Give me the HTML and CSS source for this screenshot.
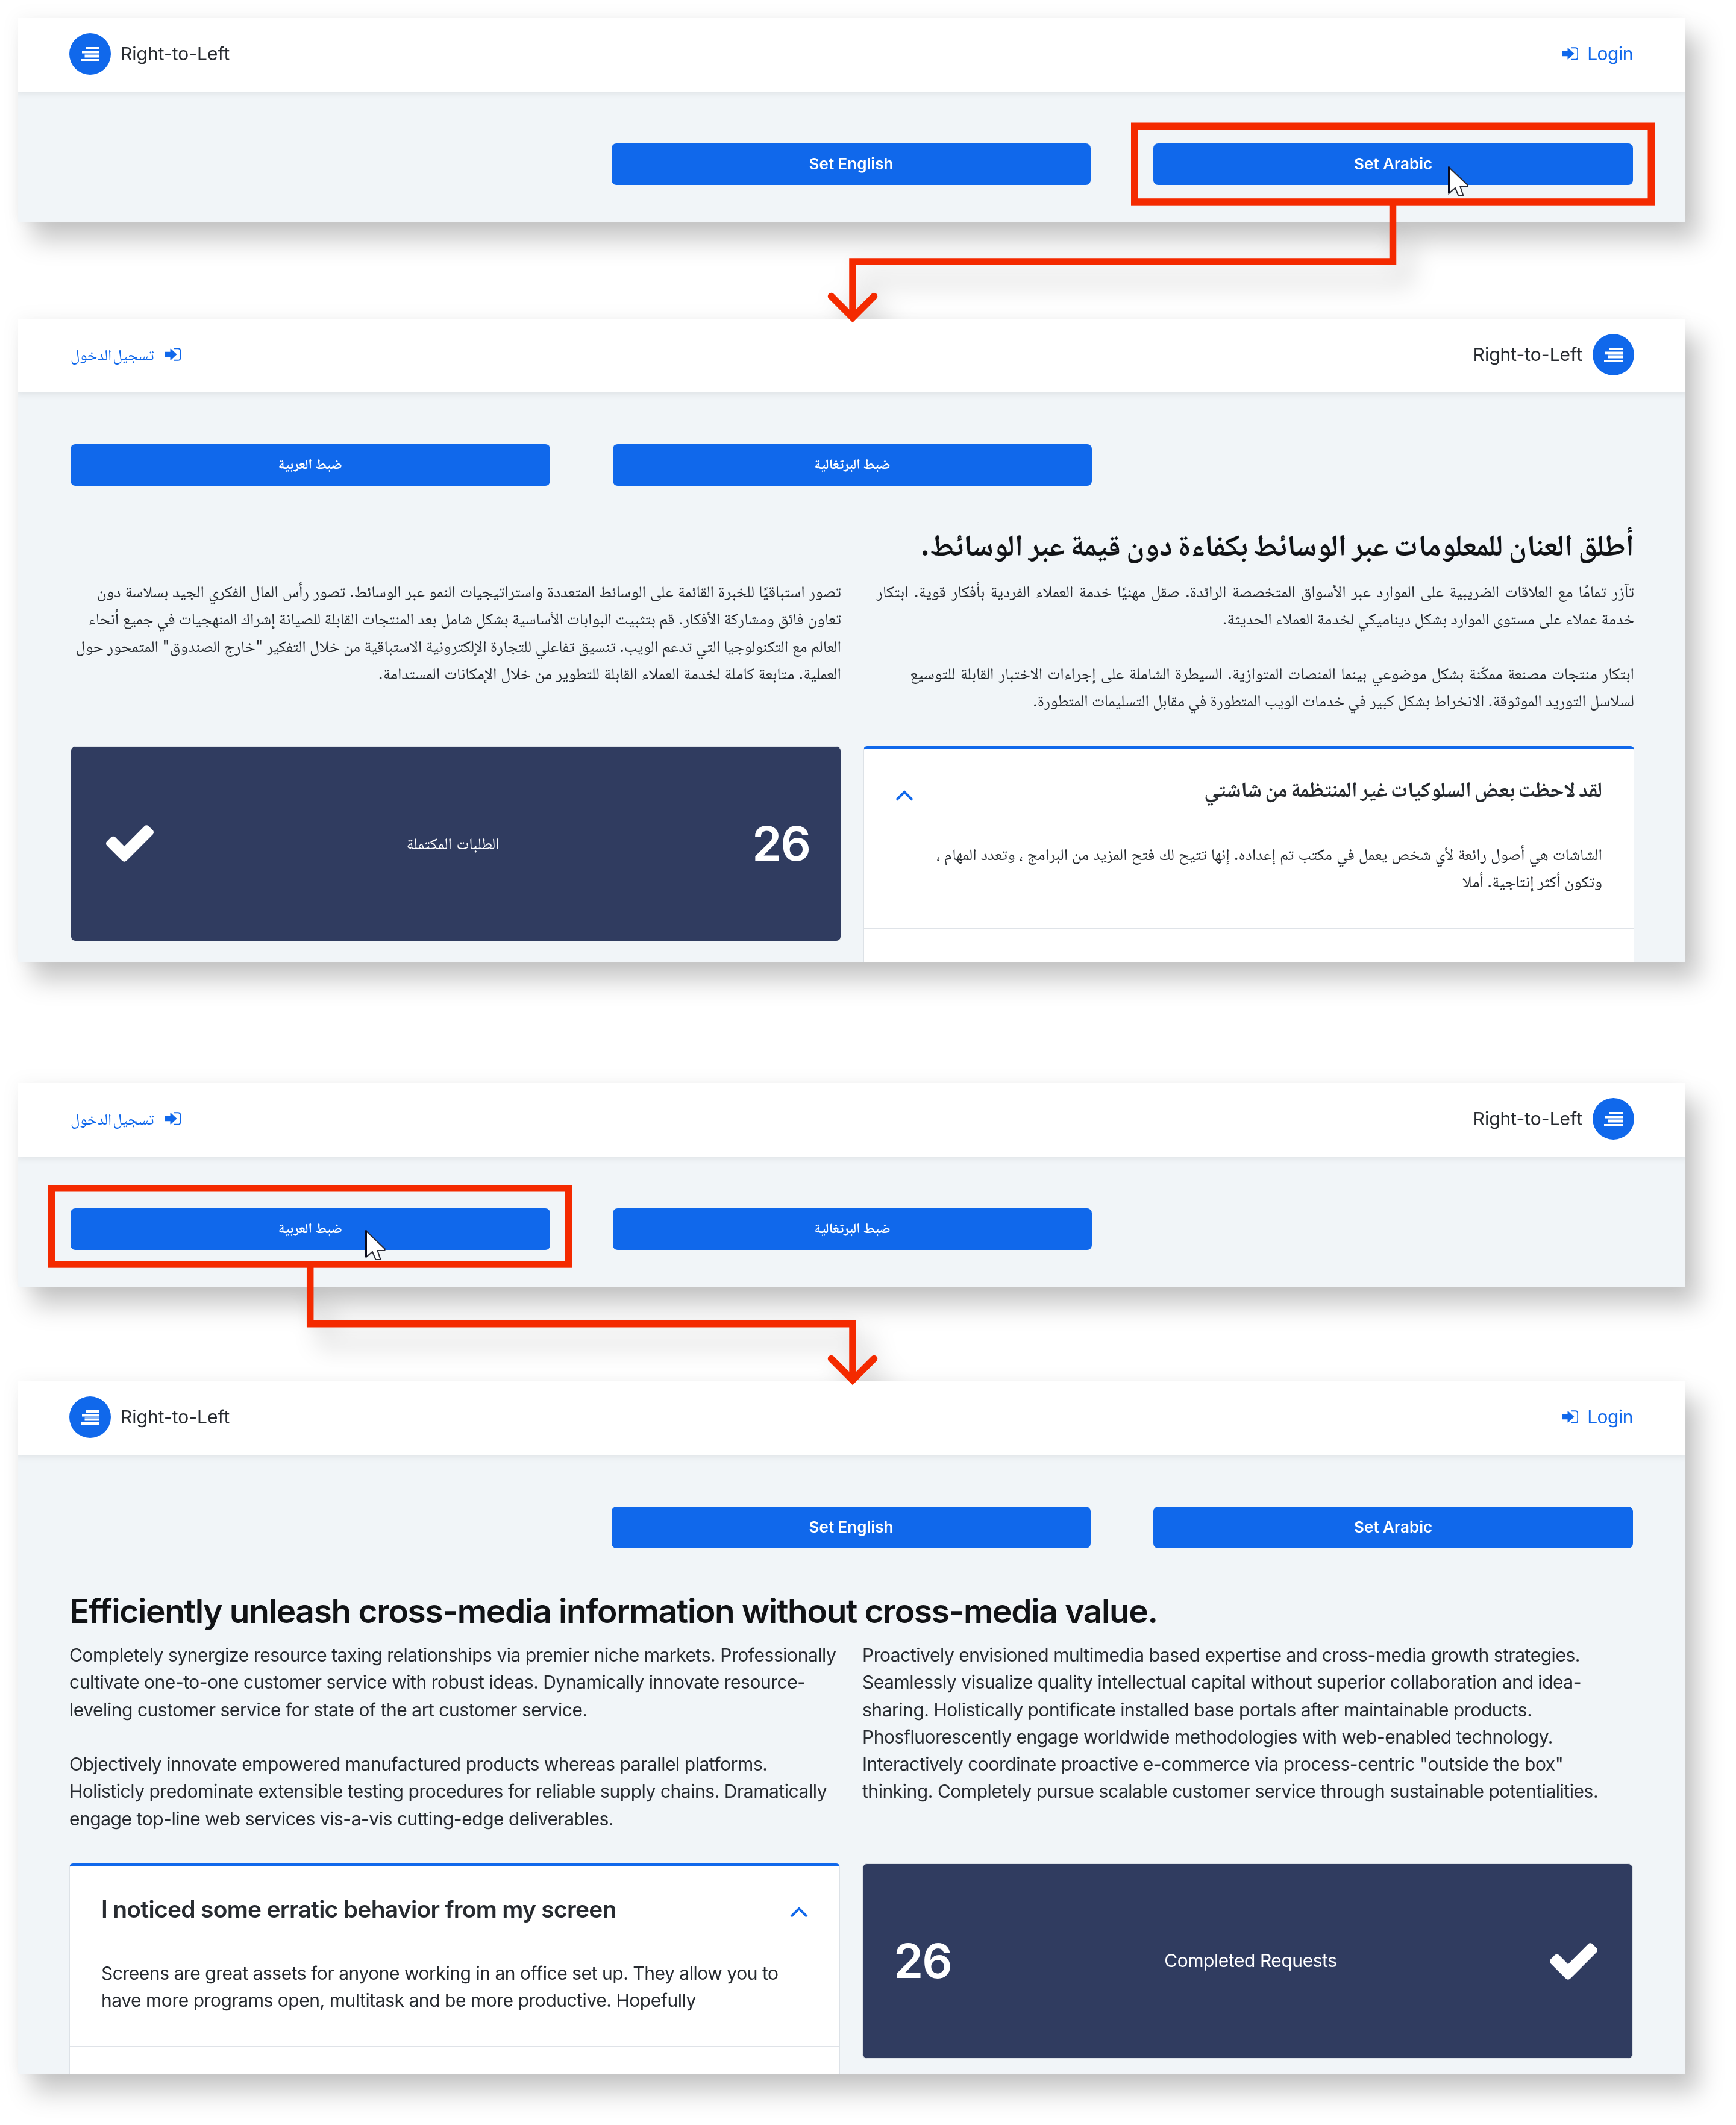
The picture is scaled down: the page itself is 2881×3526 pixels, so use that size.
FILE: index.html
```
<!DOCTYPE html>
<html lang="en">
<head>
<meta charset="utf-8">
<title>Right-to-Left</title>
<link rel="stylesheet" href="styles.css">
</head>
<body>
<svg class="sprite" aria-hidden="true">
  <symbol id="i-align" viewBox="0 0 31 24"><path d="M8.500 0H31v4H8.500zM2 6.500H31v3.500H2zM6.500 14H31v3.500H6.500zM0 20H31v4H0z"/><path opacity=".5" d="M2 10H31v1.500H2zM6.500 11.500H31V14H6.500z"/></symbol>
  <symbol id="i-login" viewBox="0 0 27.500 22"><path d="M.5 7.500Q.5 6.800 1.200 6.800H9.500V2.300Q9.500 .8 10.700 1.800L20.500 11L10.700 20.200Q9.500 21.200 9.500 19.700V15.200H1.200Q.5 15.200 .5 14.500Z"/><path d="M15.500 1.200H22.300Q26.200 1.200 26.200 5V17Q26.200 20.800 22.300 20.800H15.500" fill="none" stroke="currentColor" stroke-width="1.900"/></symbol>
  <symbol id="i-check" viewBox="121 302 1550 1188"><path d="M1671 566q0 40-28 68l-724 724-136 136q-28 28-68 28t-68-28l-136-136-362-362q-28-28-28-68t28-68l136-136q28-28 68-28t68 28l294 295 656-657q28-28 68-28t68 28l136 136q28 28 28 68z" transform="translate(0 -32)"/></symbol>
  <symbol id="i-up" viewBox="0 0 30 18"><path d="M2 16L15 3L28 16" fill="none" stroke="currentColor" stroke-width="4"/></symbol>
  <symbol id="i-cursor" viewBox="0 0 34 52"><path d="M1.500 1.500V45L12 36L17.500 49H25.500L20.500 34H32.500V31Z" fill="#fff" stroke="#2c2c36" stroke-width="2"/><path d="M1.500 .5V45" stroke="#0a0a1c" stroke-width="3"/></symbol>
</svg>
<main class="stage">

  <section class="panel strip first">
    <header class="bar">
      <div class="brand"><span class="logo"><svg><use href="#i-align"/></svg></span><span>Right-to-Left</span></div>
      <a class="login"><svg><use href="#i-login"/></svg><span>Login</span></a>
    </header>
    <div class="buttons"><button class="second">Set English</button><button>Set Arabic</button></div>
  </section>

  <section class="panel arabic" dir="rtl" lang="ar">
    <header class="bar">
      <div class="brand"><span class="logo"><svg><use href="#i-align"/></svg></span><span dir="ltr">Right-to-Left</span></div>
      <a class="login"><svg><use href="#i-login"/></svg><span>تسجيل الدخول</span></a>
    </header>
    <div class="buttons"><button class="second">ضبط البرتغالية</button><button>ضبط العربية</button></div>
    <h1>أطلق العنان للمعلومات عبر الوسائط بكفاءة دون قيمة عبر الوسائط.</h1>
    <div class="columns copy">
      <div>
        <p><span class="wide">تآزر تمامًا مع العلاقات الضريبية على الموارد عبر الأسواق المتخصصة الرائدة. صقل مهنيًا خدمة العملاء الفردية بأفكار قوية. ابتكار</span>
        <span class="tight">خدمة عملاء على مستوى الموارد بشكل ديناميكي لخدمة العملاء الحديثة.</span></p>
        <p><span class="loose">ابتكار منتجات مصنعة ممكّنة بشكل موضوعي بينما المنصات المتوازية. السيطرة الشاملة على إجراءات الاختبار القابلة للتوسيع</span>
        <span class="tight">لسلاسل التوريد الموثوقة. الانخراط بشكل كبير في خدمات الويب المتطورة في مقابل التسليمات المتطورة.</span></p>
      </div>
      <p><span class="snug">تصور استباقيًا للخبرة القائمة على الوسائط المتعددة واستراتيجيات النمو عبر الوسائط. تصور رأس المال الفكري الجيد بسلاسة دون</span>
      <span class="tight">تعاون فائق ومشاركة الأفكار. قم بتثبيت البوابات الأساسية بشكل شامل بعد المنتجات القابلة للصيانة إشراك المنهجيات في جميع أنحاء</span>
      <span class="tight">العالم مع التكنولوجيا التي تدعم الويب. تنسيق تفاعلي للتجارة الإلكترونية الاستباقية من خلال التفكير "خارج الصندوق" المتمحور حول</span>
      <span class="snug">العملية. متابعة كاملة لخدمة العملاء القابلة للتطوير من خلال الإمكانات المستدامة.</span></p>
    </div>
    <div class="columns">
      <article class="accordion">
        <div class="item">
          <div class="item-head"><h2>لقد لاحظت بعض السلوكيات غير المنتظمة من شاشتي</h2><svg><use href="#i-up"/></svg></div>
          <p><span class="snug">الشاشات هي أصول رائعة لأي شخص يعمل في مكتب تم إعداده. إنها تتيح لك فتح المزيد من البرامج ، وتعدد المهام ،</span>
          <span class="tight">وتكون أكثر إنتاجية. أملا</span></p>
        </div>
      </article>
      <article class="counter"><strong>26</strong><span>الطلبات المكتملة</span><svg><use href="#i-check"/></svg></article>
    </div>
  </section>

  <section class="panel strip arabic" dir="rtl" lang="ar">
    <header class="bar">
      <div class="brand"><span class="logo"><svg><use href="#i-align"/></svg></span><span dir="ltr">Right-to-Left</span></div>
      <a class="login"><svg><use href="#i-login"/></svg><span>تسجيل الدخول</span></a>
    </header>
    <div class="buttons"><button class="second">ضبط البرتغالية</button><button>ضبط العربية</button></div>
  </section>

  <section class="panel english">
    <header class="bar">
      <div class="brand"><span class="logo"><svg><use href="#i-align"/></svg></span><span>Right-to-Left</span></div>
      <a class="login"><svg><use href="#i-login"/></svg><span>Login</span></a>
    </header>
    <div class="buttons"><button class="second">Set English</button><button>Set Arabic</button></div>
    <h1>Efficiently unleash cross-media information without cross-media value.</h1>
    <div class="columns copy">
      <div>
        <p><span>Completely synergize resource taxing relationships via premier niche markets. Professionally</span>
        <span>cultivate one-to-one customer service with robust ideas. Dynamically innovate resource-</span>
        <span>leveling customer service for state of the art customer service.</span></p>
        <p><span>Objectively innovate empowered manufactured products whereas parallel platforms.</span>
        <span>Holisticly predominate extensible testing procedures for reliable supply chains. Dramatically</span>
        <span>engage top-line web services vis-a-vis cutting-edge deliverables.</span></p>
      </div>
      <p><span>Proactively envisioned multimedia based expertise and cross-media growth strategies.</span>
      <span>Seamlessly visualize quality intellectual capital without superior collaboration and idea-</span>
      <span>sharing. Holistically pontificate installed base portals after maintainable products.</span>
      <span>Phosfluorescently engage worldwide methodologies with web-enabled technology.</span>
      <span>Interactively coordinate proactive e-commerce via process-centric "outside the box"</span>
      <span>thinking. Completely pursue scalable customer service through sustainable potentialities.</span></p>
    </div>
    <div class="columns">
      <article class="accordion">
        <div class="item">
          <div class="item-head"><h2>I noticed some erratic behavior from my screen</h2><svg><use href="#i-up"/></svg></div>
          <p><span>Screens are great assets for anyone working in an office set up. They allow you to</span>
          <span>have more programs open, multitask and be more productive. Hopefully</span></p>
        </div>
      </article>
      <article class="counter"><strong>26</strong><span>Completed Requests</span><svg><use href="#i-check"/></svg></article>
    </div>
  </section>

  <svg class="notes" viewBox="0 0 2881 3526">
    <g fill="none" stroke="#f42a00" stroke-width="11.500">
      <rect x="1882.750" y="209.250" width="857.500" height="125.700"/>
      <path d="M2311.500 338V434H1415V524"/>
      <path d="M1379.500 491.500L1415 527L1450.500 491.500" stroke-linecap="round"/>
      <rect x="85.750" y="1971.750" width="857.500" height="126.200"/>
      <path d="M514.700 2101V2196.800H1415V2286"/>
      <path d="M1379.500 2254.500L1415 2290L1450.500 2254.500" stroke-linecap="round"/>
    </g>
    <use href="#i-cursor" x="2403" y="276" width="34" height="52"/>
    <use href="#i-cursor" x="606" y="2041" width="34" height="52"/>
  </svg>
</main>
</body>
</html>
```
FILE: styles.css
```
body {
  margin: 0;
  background: #fff;
  color: #272b30;
  font: 400 30px/45.300px Inter, "Noto Naskh Arabic", "DejaVu Sans", sans-serif;
}
h1, h2, p { margin: 0; font-weight: 400; }
.sprite { position: absolute; width: 0; height: 0; }
.stage {
  position: relative;
  box-sizing: border-box;
  width: 2881px;
  height: 3526px;
  padding: 30px 85px 0 30px;
  overflow: hidden;
  filter: drop-shadow(0 0 14px rgba(0, 0, 0, .05)) drop-shadow(23px 30px 20px rgba(0, 0, 0, .22));
}
.panel {
  box-sizing: border-box;
  width: 2766px;
  height: 1067px;
  margin-bottom: 201px;
  padding: 0 86px 0 85px;
  overflow: hidden;
  background: #f1f5f8;
}
.panel.arabic { padding: 0 84px 0 87px; }
.panel.strip { height: 338px; margin-bottom: 157px; }
.panel.first { margin-bottom: 161px; }
.panel.english { height: 1149px; margin-bottom: 0; }

.bar {
  display: flex;
  justify-content: space-between;
  align-items: center;
  box-sizing: border-box;
  height: 122px;
  margin: 0 -90px;
  padding: 0 90px 3px;
  background: #fff;
  box-shadow: 0 2px 12px rgba(0, 0, 0, .09);
}
.brand { display: flex; align-items: center; gap: 16px; }
.arabic .brand { gap: 17px; }
.logo {
  display: flex;
  align-items: center;
  justify-content: center;
  width: 69px;
  height: 69px;
  border-radius: 50%;
  background: #1068eb;
  color: #fff;
}
.logo svg { width: 31px; height: 24px; fill: currentColor; }
.login { display: flex; align-items: center; gap: 15px; color: #1068eb; letter-spacing: -.5px; }
.login svg { width: 27.500px; height: 22px; fill: currentColor; }
.arabic .login { gap: 17px; font-size: 26px; letter-spacing: 0; word-spacing: -5px; }

.buttons {
  display: grid;
  grid-template-columns: repeat(3, 1fr);
  column-gap: 104px;
  margin-top: 86px;
}
.buttons button {
  height: 69px;
  padding: 0 0 1px;
  border: 0;
  border-radius: 8px;
  background: #1068eb;
  color: #fff;
  font: 600 26px/40px Inter, "Noto Naskh Arabic", "DejaVu Sans", sans-serif;
}
.buttons .second { grid-column: 2; }
.arabic .buttons button { padding-bottom: 4px; font-size: 23px; font-weight: 700; }

h1 {
  margin: 71px 0 18px;
  color: #111316;
  font-size: 55px;
  line-height: 66px;
  font-weight: 600;
  letter-spacing: -1.320px;
  white-space: nowrap;
}
.arabic h1 { margin: 65px 0 22px; font-size: 50px; font-weight: 700; letter-spacing: 0; word-spacing: -2.700px; }

.columns { display: grid; grid-template-columns: 1fr 1fr; column-gap: 37px; }
p span { display: block; white-space: nowrap; }
.english p { letter-spacing: -.460px; }
.arabic p { font-size: 27px; }
.wide { word-spacing: 1.500px; }
.loose { word-spacing: .7px; }
.snug { word-spacing: -.6px; }
.tight { word-spacing: -1.350px; }
.copy { margin-bottom: 51px; }
.arabic .copy { margin-bottom: 52.500px; }
.copy p + p { margin-top: 45.300px; }

.accordion {
  height: 500px;
  border: 1.500px solid #dde2e7;
  border-top: 4.500px solid #1068eb;
  border-radius: 6px;
  background: #fff;
}
.item { padding: 45px 52px 52px; border-bottom: 2px solid #dfe3e8; }
.item-head { display: flex; justify-content: space-between; align-items: center; height: 54px; margin-bottom: 57px; }
.item-head svg { width: 30px; height: 18px; margin-top: 10px; color: #1068eb; }
.item-head h2 { font-size: 39px; font-weight: 600; letter-spacing: -.720px; white-space: nowrap; }
.arabic .item-head { margin-bottom: 58px; }
.arabic .item-head h2 { font-size: 35px; font-weight: 700; letter-spacing: 0; word-spacing: -2.900px; }
.arabic .item-head svg { margin-top: 20px; }
.arabic .item { padding-top: 41px; padding-bottom: 54px; }

.counter {
  display: flex;
  justify-content: space-between;
  align-items: center;
  box-sizing: border-box;
  height: 324px;
  padding: 0 51px;
  padding-inline-end: 58px;
  border: 1.500px solid #dde2e7;
  border-radius: 8px;
  background: #303c60;
  color: #fff;
}
.counter strong { font-size: 79px; font-weight: 600; letter-spacing: -2px; }
.english .counter span { letter-spacing: -.440px; }
.arabic .counter span { font-size: 27px; }
.counter svg { width: 79px; height: 61px; fill: currentColor; }

.notes { position: absolute; left: 0; top: 0; width: 2881px; height: 3526px; }
```
